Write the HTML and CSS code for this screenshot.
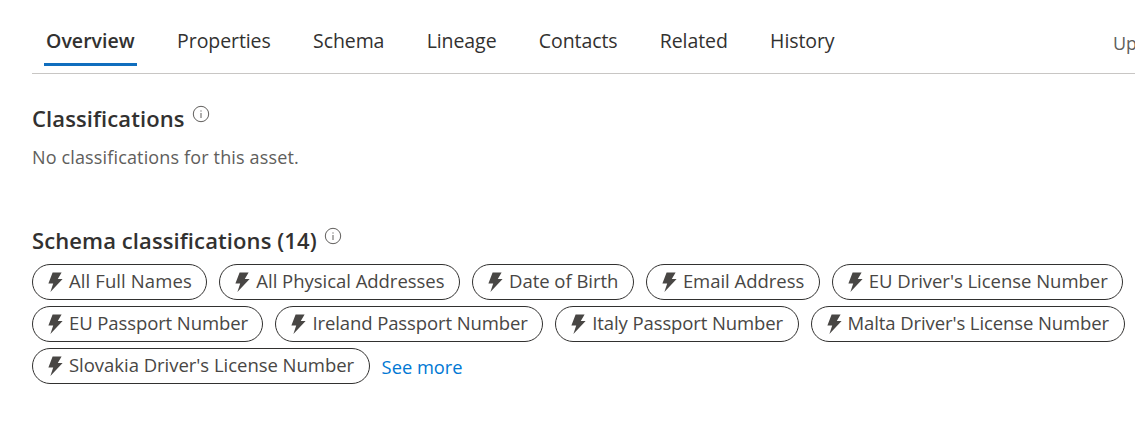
FILE: index.html
```html
<!DOCTYPE html>
<html lang="en">
<head>
<meta charset="utf-8">
<title>Overview</title>
<link rel="stylesheet" href="styles.css">
</head>
<body>
<svg class="defs" width="0" height="0" aria-hidden="true">
  <symbol id="bolt" viewBox="0 0 16 20"><path d="M5.6 0.6H14.6L10.8 7H15.6L3.4 20 6.2 11.4H1.4Z"/></symbol>
  <symbol id="info" viewBox="0 0 18 18"><circle cx="9" cy="9" r="7.7" fill="none" stroke="currentColor" stroke-width="1"/><rect x="8.5" y="8" width="1" height="5" fill="currentColor"/><rect x="8.5" y="5.4" width="1" height="1.2" fill="currentColor"/></symbol>
</svg>
<main class="page">
  <nav class="tabs">
    <a class="tab active">Overview</a>
    <a class="tab">Properties</a>
    <a class="tab">Schema</a>
    <a class="tab">Lineage</a>
    <a class="tab">Contacts</a>
    <a class="tab">Related</a>
    <a class="tab">History</a>
    <span class="updated">Updated</span>
  </nav>
  <section class="first">
    <h2 class="heading">Classifications <svg class="info"><use href="#info"/></svg></h2>
    <p class="empty">No classifications for this asset.</p>
  </section>
  <section class="second">
    <h2 class="heading">Schema classifications (14) <svg class="info"><use href="#info"/></svg></h2>
    <div class="pills">
      <span class="pill wide"><svg class="bolt"><use href="#bolt"/></svg>All Full Names</span>
      <span class="pill"><svg class="bolt"><use href="#bolt"/></svg>All Physical Addresses</span>
      <span class="pill"><svg class="bolt"><use href="#bolt"/></svg>Date of Birth</span>
      <span class="pill"><svg class="bolt"><use href="#bolt"/></svg>Email Address</span>
      <span class="pill"><svg class="bolt"><use href="#bolt"/></svg>EU Driver's License Number</span>
      <span class="pill tight"><svg class="bolt"><use href="#bolt"/></svg>EU Passport Number</span>
      <span class="pill tight"><svg class="bolt"><use href="#bolt"/></svg>Ireland Passport Number</span>
      <span class="pill tight"><svg class="bolt"><use href="#bolt"/></svg>Italy Passport Number</span>
      <span class="pill tight"><svg class="bolt"><use href="#bolt"/></svg>Malta Driver's License Number</span>
      <span class="pill"><svg class="bolt"><use href="#bolt"/></svg>Slovakia Driver's License Number</span>
      <a class="more">See more</a>
    </div>
  </section>
</main>
</body>
</html>
```
FILE: styles.css
```css
html, body {
  margin: 0;
  height: 100%;
  overflow: hidden;
  background: #fff;
}
.defs { display: block; height: 0; }
.page {
  padding: 0 0 0 32px;
  font-family: "Open Sans", "Noto Sans", sans-serif;
  color: #323130;
}
.tabs {
  display: flex;
  align-items: flex-start;
  height: 73px;
  padding-left: 12px;
  gap: 38.3px;
  border-bottom: 1px solid #c8c6c4;
  white-space: nowrap;
  overflow: hidden;
  font-size: 19.5px;
  line-height: 26px;
}
.tab {
  padding: 28px 2px 0;
  height: 35px;
  letter-spacing: -0.08px;
}
.tab.active {
  font-weight: 600;
  letter-spacing: 0.05px;
  border-bottom: 3px solid #106ebe;
}
.updated {
  margin-left: auto;
  width: 22px;
  overflow: hidden;
  padding-top: 30px;
  font-size: 18px;
  color: #605e5c;
}
.heading {
  margin: 0;
  font-size: 22px;
  font-weight: 600;
  line-height: 30px;
  letter-spacing: 0.1px;
  display: flex;
  gap: 7px;
}
.info {
  width: 18px;
  height: 18px;
  margin-top: 2px;
  color: #605e5c;
}
.first { padding-top: 29px; }
.empty {
  margin: 12px 0 0;
  font-size: 18px;
  line-height: 25px;
  color: #605e5c;
  letter-spacing: 0.15px;
}
.second { padding-top: 55px; }
.pills {
  display: flex;
  flex-wrap: wrap;
  align-items: center;
  column-gap: 12px;
  row-gap: 6px;
  margin-top: 9px;
}
.pill {
  display: inline-flex;
  align-items: center;
  height: 36px;
  box-sizing: border-box;
  padding: 0 14.5px 4px 14px;
  border: 1px solid #323130;
  border-radius: 18px;
  font-size: 18.5px;
  letter-spacing: -0.03px;
  color: #484644;
  white-space: nowrap;
}
.pill.wide { letter-spacing: 0.1px; }
.pill.tight { letter-spacing: -0.1px; }
.bolt {
  width: 16px;
  height: 20px;
  margin: 3px 6px 0 0;
  fill: #484644;
}
.more {
  font-size: 18.3px;
  color: #0078d4;
}
```
